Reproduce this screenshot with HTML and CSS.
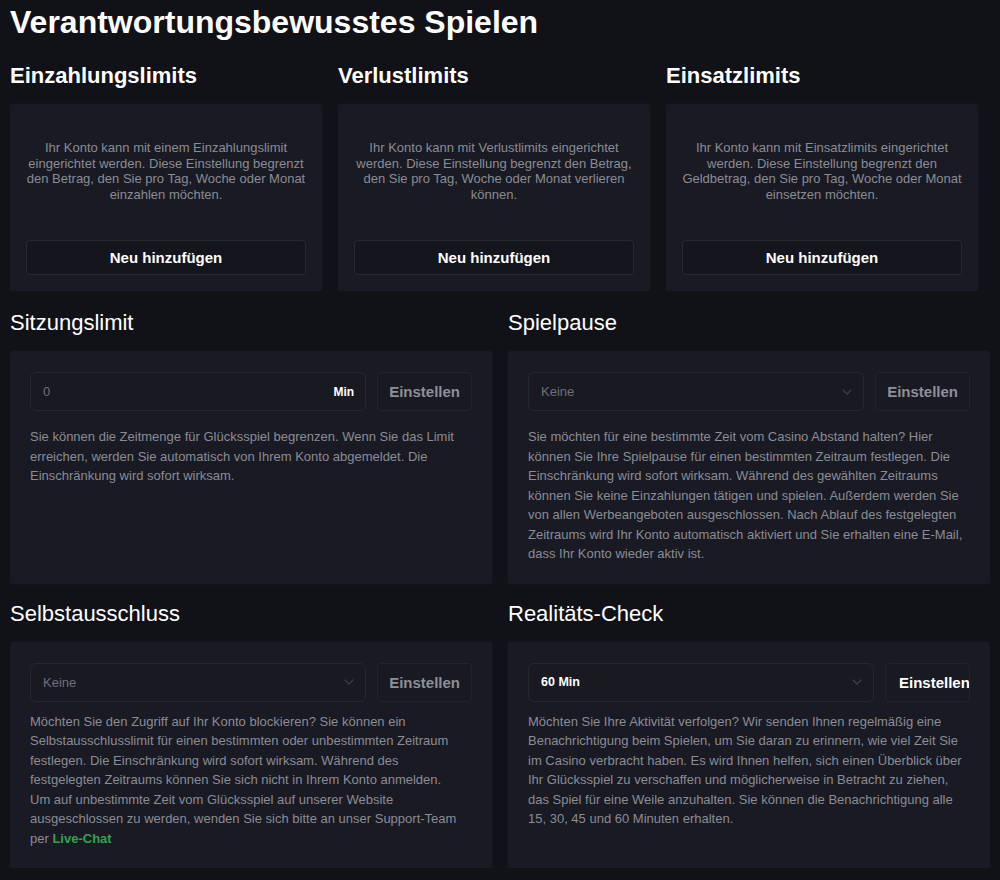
FILE: index.html
```html
<!DOCTYPE html>
<html lang="de">
<head>
<meta charset="utf-8">
<title>Verantwortungsbewusstes Spielen</title>
<link rel="stylesheet" href="styles.css">
</head>
<body>
<main class="page">
  <h1 class="page-title">Verantwortungsbewusstes Spielen</h1>

  <div class="limits">
    <section class="limit">
      <h2 class="limit__title">Einzahlungslimits</h2>
      <div class="card card--limit">
        <p class="limit__text">Ihr Konto kann mit einem Einzahlungslimit eingerichtet werden. Diese Einstellung begrenzt den Betrag, den Sie pro Tag, Woche oder Monat einzahlen möchten.</p>
        <button class="btn-add" type="button">Neu hinzufügen</button>
      </div>
    </section>
    <section class="limit">
      <h2 class="limit__title">Verlustlimits</h2>
      <div class="card card--limit">
        <p class="limit__text">Ihr Konto kann mit Verlustlimits eingerichtet werden. Diese Einstellung begrenzt den Betrag, den Sie pro Tag, Woche oder Monat verlieren können.</p>
        <button class="btn-add" type="button">Neu hinzufügen</button>
      </div>
    </section>
    <section class="limit">
      <h2 class="limit__title">Einsatzlimits</h2>
      <div class="card card--limit">
        <p class="limit__text">Ihr Konto kann mit Einsatzlimits eingerichtet werden. Diese Einstellung begrenzt den Geldbetrag, den Sie pro Tag, Woche oder Monat einsetzen möchten.</p>
        <button class="btn-add" type="button">Neu hinzufügen</button>
      </div>
    </section>
  </div>

  <div class="settings">
    <section class="setting">
      <h2 class="setting__title">Sitzungslimit</h2>
      <div class="card card--setting">
        <div class="controls controls--wide">
          <div class="field">
            <span class="field__value field__value--muted">0</span>
            <span class="field__suffix">Min</span>
          </div>
          <button class="btn-set" type="button">Einstellen</button>
        </div>
        <p class="setting__text">Sie können die Zeitmenge für Glücksspiel begrenzen. Wenn Sie das Limit erreichen, werden Sie automatisch von Ihrem Konto abgemeldet. Die Einschränkung wird sofort wirksam.</p>
      </div>
    </section>

    <section class="setting">
      <h2 class="setting__title">Spielpause</h2>
      <div class="card card--setting">
        <div class="controls controls--wide">
          <div class="field">
            <span class="field__value field__value--muted">Keine</span>
            <svg class="field__chevron" width="10" height="6" viewBox="0 0 10 6" aria-hidden="true"><path d="M1 1l4 4 4-4" fill="none" stroke="#3b3c47" stroke-width="1.3" stroke-linecap="round" stroke-linejoin="round"/></svg>
          </div>
          <button class="btn-set" type="button">Einstellen</button>
        </div>
        <p class="setting__text">Sie möchten für eine bestimmte Zeit vom Casino Abstand halten? Hier können Sie Ihre Spielpause für einen bestimmten Zeitraum festlegen. Die Einschränkung wird sofort wirksam. Während des gewählten Zeitraums können Sie keine Einzahlungen tätigen und spielen. Außerdem werden Sie von allen Werbeangeboten ausgeschlossen. Nach Ablauf des festgelegten Zeitraums wird Ihr Konto automatisch aktiviert und Sie erhalten eine E-Mail, dass Ihr Konto wieder aktiv ist.</p>
      </div>
    </section>

    <section class="setting">
      <h2 class="setting__title">Selbstausschluss</h2>
      <div class="card card--setting">
        <div class="controls">
          <div class="field">
            <span class="field__value field__value--muted">Keine</span>
            <svg class="field__chevron" width="10" height="6" viewBox="0 0 10 6" aria-hidden="true"><path d="M1 1l4 4 4-4" fill="none" stroke="#3b3c47" stroke-width="1.3" stroke-linecap="round" stroke-linejoin="round"/></svg>
          </div>
          <button class="btn-set" type="button">Einstellen</button>
        </div>
        <p class="setting__text">Möchten Sie den Zugriff auf Ihr Konto blockieren? Sie können ein Selbstausschlusslimit für einen bestimmten oder unbestimmten Zeitraum festlegen. Die Einschränkung wird sofort wirksam. Während des festgelegten Zeitraums können Sie sich nicht in Ihrem Konto anmelden.<br>Um auf unbestimmte Zeit vom Glücksspiel auf unserer Website ausgeschlossen zu werden, wenden Sie sich bitte an unser Support-Team per <a class="link-chat" href="#">Live-Chat</a></p>
      </div>
    </section>

    <section class="setting">
      <h2 class="setting__title">Realitäts-Check</h2>
      <div class="card card--setting">
        <div class="controls">
          <div class="field">
            <span class="field__value field__value--active">60 Min</span>
            <svg class="field__chevron" width="10" height="6" viewBox="0 0 10 6" aria-hidden="true"><path d="M1 1l4 4 4-4" fill="none" stroke="#3b3c47" stroke-width="1.3" stroke-linecap="round" stroke-linejoin="round"/></svg>
          </div>
          <button class="btn-set btn-set--active" type="button">Einstellen</button>
        </div>
        <p class="setting__text">Möchten Sie Ihre Aktivität verfolgen? Wir senden Ihnen regelmäßig eine Benachrichtigung beim Spielen, um Sie daran zu erinnern, wie viel Zeit Sie im Casino verbracht haben. Es wird Ihnen helfen, sich einen Überblick über Ihr Glücksspiel zu verschaffen und möglicherweise in Betracht zu ziehen, das Spiel für eine Weile anzuhalten. Sie können die Benachrichtigung alle 15, 30, 45 und 60 Minuten erhalten.</p>
      </div>
    </section>
  </div>
</main>
</body>
</html>
```

FILE: styles.css
```css
* { box-sizing: border-box; }

html, body {
  margin: 0;
  padding: 0;
  background: #111118;
}

body {
  font-family: "Liberation Sans", Arial, sans-serif;
  color: #ffffff;
}

.page {
  padding: 4px 10px 0;
}

.page-title {
  margin: 0;
  font-size: 32px;
  line-height: 36px;
  font-weight: 700;
  color: #ffffff;
}

/* ---------- top limit cards ---------- */
.limits {
  margin-top: 23px;
  width: 968px;
  display: grid;
  grid-template-columns: repeat(3, 1fr);
  column-gap: 16px;
}

.limit__title {
  margin: 0 0 15px;
  font-size: 22px;
  line-height: 26px;
  font-weight: 700;
}

.card {
  background: #191a23;
  border-radius: 3px;
  box-shadow: 0 0 0 1px rgba(255, 255, 255, 0.015);
}

.card--limit {
  padding: 36px 16px 16px;
  display: flex;
  flex-direction: column;
}

.limit__text {
  margin: 0;
  font-size: 13px;
  line-height: 15.6px;
  text-align: center;
  color: #8b8c95;
}

.btn-add {
  margin-top: 38px;
  height: 35px;
  width: 100%;
  background: #14151d;
  border: 1px solid #272832;
  border-radius: 4px;
  color: #ffffff;
  font-family: "Liberation Sans", Arial, sans-serif;
  font-size: 15px;
  font-weight: 700;
  cursor: pointer;
}

/* ---------- settings ---------- */
.settings {
  margin-top: 19px;
  width: 980px;
  display: grid;
  grid-template-columns: 1fr 1fr;
  column-gap: 16px;
  row-gap: 17px;
}

.setting {
  display: flex;
  flex-direction: column;
}

.setting__title {
  margin: 0 0 15px;
  font-size: 22px;
  line-height: 26px;
  font-weight: 400;
}

.card--setting {
  flex: 1;
  padding: 21px 20px 20px;
}

.controls {
  display: flex;
  gap: 11px;
  margin-bottom: 10px;
}

.controls--wide {
  margin-bottom: 16px;
}

.field {
  flex: 1;
  height: 39px;
  display: flex;
  align-items: center;
  justify-content: space-between;
  padding: 0 11px 0 12px;
  border: 1px solid #262731;
  border-radius: 6px;
  background: #181921;
}

.field__value {
  font-size: 13px;
}

.field__value--muted {
  color: #6f707a;
}

.field__value--active {
  color: #ffffff;
  font-weight: 700;
  font-size: 12.5px;
}

.field__suffix {
  font-size: 12px;
  font-weight: 700;
  color: #ffffff;
}

.field__chevron {
  display: block;
}

.btn-set {
  flex: none;
  height: 39px;
  padding: 0 11px;
  background: #181921;
  border: 1px solid #22232d;
  border-radius: 4px;
  color: #8e8f97;
  font-family: "Liberation Sans", Arial, sans-serif;
  font-size: 15px;
  font-weight: 700;
  cursor: pointer;
}

.btn-set--active {
  width: 85px;
  padding: 0 0 0 13px;
  text-align: left;
  white-space: nowrap;
  overflow: hidden;
  color: #ffffff;
}

.setting__text {
  margin: 0;
  font-size: 13px;
  line-height: 19.5px;
  color: #8b8c95;
}

.link-chat {
  color: #2ba552;
  font-weight: 700;
  text-decoration: none;
}
```
